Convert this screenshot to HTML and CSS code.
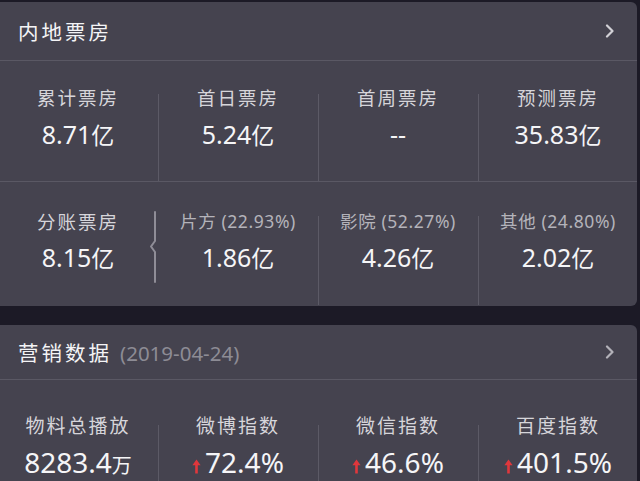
FILE: index.html
```html
<!DOCTYPE html>
<html lang="zh-CN">
<head>
<meta charset="utf-8">
<title>票房</title>
<link rel="stylesheet" href="styles.css">
</head>
<body>
<div class="page">
  <section class="card card-box">
    <div class="head">
      <h2 class="title">内地票房</h2>
      <svg class="chev" width="10" height="14" viewBox="0 0 10 14"><polyline points="2,1.5 7.5,7 2,12.5" fill="none" stroke="#d2d1d6" stroke-width="2.2" stroke-linecap="round" stroke-linejoin="round"/></svg>
    </div>
    <div class="row row1">
      <div class="cell"><div class="lbl">累计票房</div><div class="val">8.71<span class="unit">亿</span></div></div>
      <div class="cell sep"><div class="lbl">首日票房</div><div class="val">5.24<span class="unit">亿</span></div></div>
      <div class="cell sep"><div class="lbl">首周票房</div><div class="val">--</div></div>
      <div class="cell sep"><div class="lbl">预测票房</div><div class="val">35.83<span class="unit">亿</span></div></div>
    </div>
    <div class="row row2">
      <div class="cell first">
        <div class="lbl">分账票房</div><div class="val">8.15<span class="unit">亿</span></div>
        <svg class="brace" width="8" height="72" viewBox="0 0 8 72"><polyline points="6,1 6,30 2,35.5 6,41 6,71" fill="none" stroke="#8f8d97" stroke-width="2" stroke-linejoin="round" stroke-linecap="round"/></svg>
      </div>
      <div class="cell"><div class="lbl sub">片方 (22.93%)</div><div class="val">1.86<span class="unit">亿</span></div></div>
      <div class="cell sep"><div class="lbl sub">影院 (52.27%)</div><div class="val">4.26<span class="unit">亿</span></div></div>
      <div class="cell sep"><div class="lbl sub">其他 (24.80%)</div><div class="val">2.02<span class="unit">亿</span></div></div>
    </div>
  </section>

  <section class="card card-mkt">
    <div class="head head2">
      <h2 class="title">营销数据<span class="date">(2019-04-24)</span></h2>
      <svg class="chev" width="10" height="14" viewBox="0 0 10 14"><polyline points="2,1.5 7.5,7 2,12.5" fill="none" stroke="#b3b2b9" stroke-width="2.2" stroke-linecap="round" stroke-linejoin="round"/></svg>
    </div>
    <div class="row row3">
      <div class="cell"><div class="lbl">物料总播放</div><div class="val big">8283.4<span class="unit wan">万</span></div></div>
      <div class="cell sep"><div class="lbl">微博指数</div><div class="val big"><svg class="up" width="9" height="15" viewBox="0 0 9 15"><path d="M4.5 0.5 L8.6 6.2 L5.8 6.2 L5.8 14.5 L3.2 14.5 L3.2 6.2 L0.4 6.2 Z" fill="#e0373c"/></svg>72.4%</div></div>
      <div class="cell sep"><div class="lbl">微信指数</div><div class="val big"><svg class="up" width="9" height="15" viewBox="0 0 9 15"><path d="M4.5 0.5 L8.6 6.2 L5.8 6.2 L5.8 14.5 L3.2 14.5 L3.2 6.2 L0.4 6.2 Z" fill="#e0373c"/></svg>46.6%</div></div>
      <div class="cell sep"><div class="lbl">百度指数</div><div class="val big"><svg class="up" width="9" height="15" viewBox="0 0 9 15"><path d="M4.5 0.5 L8.6 6.2 L5.8 6.2 L5.8 14.5 L3.2 14.5 L3.2 6.2 L0.4 6.2 Z" fill="#e0373c"/></svg>401.5%</div></div>
    </div>
  </section>
</div>
</body>
</html>
```

FILE: styles.css
```css
html, body {
  margin: 0;
  padding: 0;
  background: #1c1a26;
  overflow: hidden;
}
body {
  width: 640px;
  height: 481px;
  font-family: "Noto Sans", "Noto Sans CJK SC", sans-serif;
  color: #f2f2f4;
}
.page {
  padding-top: 2px;
}
.card {
  background: #45434f;
  border-radius: 6px;
  margin-left: -6px;
  width: 643px;
}
.card-box {
  height: 304px;
}
.card-mkt {
  margin-top: 19px;
  height: 160px;
  border-bottom-left-radius: 0;
  border-bottom-right-radius: 0;
}
.head {
  height: 58px;
  display: flex;
  align-items: center;
  justify-content: space-between;
  padding: 0 22px 0 24px;
  border-bottom: 1px solid #5a5864;
}
.head2 {
  height: 54px;
}
.title {
  margin: 0;
  font-family: "Noto Sans CJK SC", sans-serif;
  font-weight: 400;
  font-size: 20.5px;
  letter-spacing: 3px;
  color: #f4f4f6;
  line-height: 28px;
}
.date {
  font-family: "Noto Sans", sans-serif;
  font-size: 20.5px;
  letter-spacing: 0;
  color: #8d8c95;
  margin-left: 8px;
}
.chev {
  display: block;
}
.row {
  display: grid;
  grid-template-columns: repeat(4, 160px);
  padding-left: 4px;
}
.row1 {
  height: 121px;
  padding-top: 26px;
  box-sizing: border-box;
  border-bottom: 1px solid #5a5864;
}
.row2 {
  height: 123px;
  padding-top: 29px;
  box-sizing: border-box;
}
.row3 {
  padding-top: 35px;
}
.cell {
  position: relative;
  text-align: center;
}
.sep::before {
  content: "";
  position: absolute;
  left: 0;
  top: 7px;
  bottom: 0;
  width: 1px;
  background: #5c5a66;
}
.row2 .sep::before {
  top: 5px;
}
.row3 .sep::before {
  top: 10px;
  bottom: -20px;
}
.lbl {
  font-family: "Noto Sans CJK SC", sans-serif;
  font-size: 18.5px;
  line-height: 20px;
  letter-spacing: 2px;
  color: #d6d5da;
}
.lbl.sub {
  font-family: "Noto Sans", "Noto Sans CJK SC", sans-serif;
  font-size: 17.5px;
  letter-spacing: 0.6px;
  color: #b4b3ba;
}
.row3 .lbl {
  font-size: 19px;
}
.val {
  margin-top: 11px;
  font-size: 25px;
  line-height: 30px;
  color: #f5f5f7;
}
.row1 .val {
  margin-top: 12px;
}
.unit {
  font-family: "Noto Sans CJK SC", sans-serif;
  font-size: 23px;
}
.val.big {
  margin-top: 10px;
  font-size: 28px;
  line-height: 34px;
  display: flex;
  justify-content: center;
  align-items: baseline;
}
.wan {
  font-size: 20px;
}
.up {
  margin-right: 4px;
  align-self: flex-end;
  margin-bottom: 5px;
}
.brace {
  position: absolute;
  left: 151px;
  top: 0;
}
```
